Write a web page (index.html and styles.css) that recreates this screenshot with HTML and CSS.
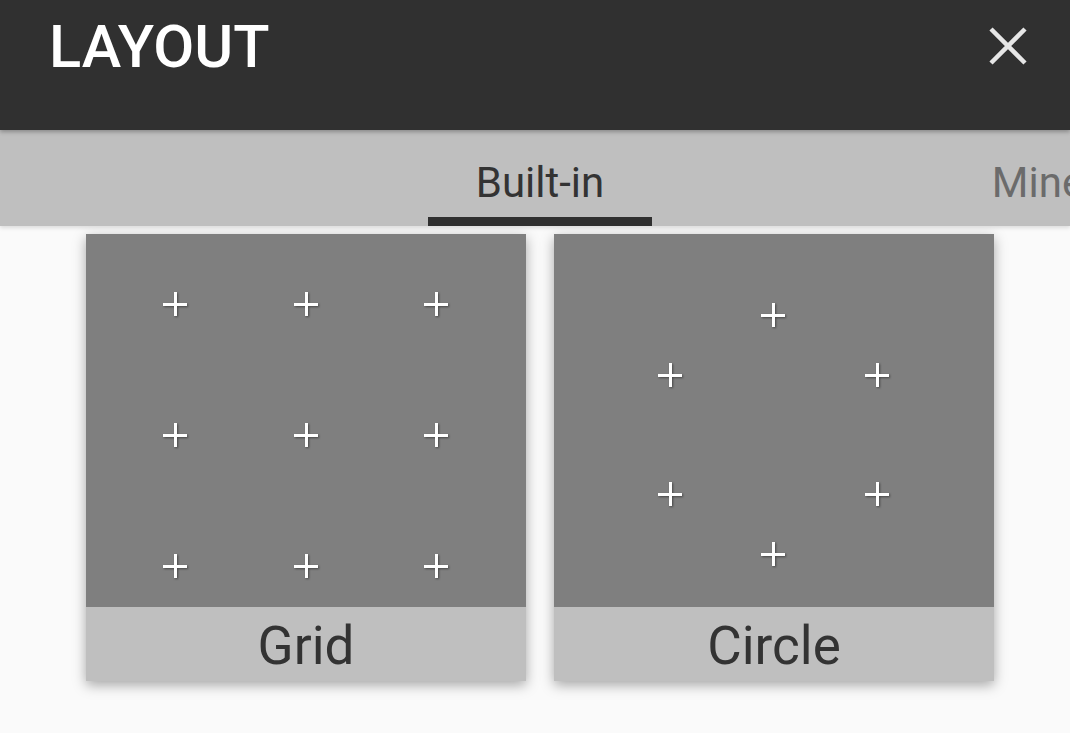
FILE: index.html
```html
<!DOCTYPE html>
<html>
<head>
<meta charset="utf-8">
<link rel="stylesheet" href="styles.css">
</head>
<body>
<div class="screen">
  <header class="appbar">
    <h1 class="title">LAYOUT</h1>
    <svg class="close" width="38" height="38" viewBox="0 0 38 38" aria-label="Close">
      <path d="M2 2 L36 36 M36 2 L2 36" stroke="#e6e6e6" stroke-width="4.5" stroke-linecap="butt" fill="none"/>
    </svg>
  </header>
  <nav class="tabs">
    <div class="tab tab-active"><span class="tab-label">Built-in</span><span class="indicator"></span></div>
    <div class="tab"><span class="tab-label">Mine</span></div>
  </nav>
  <main class="content">
    <div class="card">
      <div class="preview">
        <span class="plus g11"></span><span class="plus g12"></span><span class="plus g13"></span>
        <span class="plus g21"></span><span class="plus g22"></span><span class="plus g23"></span>
        <span class="plus g31"></span><span class="plus g32"></span><span class="plus g33"></span>
      </div>
      <div class="label">Grid</div>
    </div>
    <div class="card">
      <div class="preview">
        <span class="plus c1"></span>
        <span class="plus c2"></span><span class="plus c3"></span>
        <span class="plus c4"></span><span class="plus c5"></span>
        <span class="plus c6"></span>
      </div>
      <div class="label">Circle</div>
    </div>
  </main>
</div>
</body>
</html>
```

FILE: styles.css
```css
html, body {
  margin: 0;
  padding: 0;
  background: #fafafa;
}
body {
  font-family: Roboto, "Noto Sans", "Liberation Sans", sans-serif;
}
.screen {
  width: 1070px;
  height: 733px;
  overflow: hidden;
  background: #fafafa;
}
.appbar {
  position: relative;
  z-index: 2;
  height: 130px;
  background: #303030;
  display: flex;
  justify-content: space-between;
  align-items: flex-start;
  padding: 17px 43px 0 49px;
  box-sizing: border-box;
  box-shadow: 0 2px 4px rgba(0, 0, 0, 0.28);
}
.title {
  margin: 0;
  font-size: 59.5px;
  line-height: 61px;
  font-weight: 500;
  color: #ffffff;
  letter-spacing: 0;
}
.close {
  display: block;
  margin-top: 10px;
}
.tabs {
  position: relative;
  z-index: 1;
  height: 96px;
  background: #bfbfbf;
  display: flex;
  padding-left: 291px;
  overflow: hidden;
  box-shadow: 0 2px 4px rgba(0, 0, 0, 0.12);
}
.tab {
  position: relative;
  flex: 0 0 498px;
  display: flex;
  justify-content: center;
  padding-top: 32px;
  box-sizing: border-box;
}
.tab-label {
  font-size: 42px;
  line-height: 42px;
  color: #6b6b6b;
}
.tab-active .tab-label {
  color: #333333;
}
.indicator {
  position: absolute;
  left: 137px;
  bottom: 0;
  width: 224px;
  height: 9px;
  background: #303030;
}
.content {
  display: flex;
  gap: 28px;
  padding: 8px 0 0 86px;
}
.card {
  width: 440px;
  box-shadow: 0 4px 12px rgba(0, 0, 0, 0.34);
}
.preview {
  position: relative;
  height: 373px;
  background: #7f7f7f;
}
.label {
  height: 74px;
  box-sizing: border-box;
  padding-top: 13px;
  background: #bfbfbf;
  text-align: center;
  font-size: 53px;
  line-height: 53px;
  color: #333333;
}
.plus {
  position: absolute;
  width: 24px;
  height: 24px;
  margin: -12px 0 0 -12px;
  filter: drop-shadow(1px 1px 1px rgba(0, 0, 0, 0.45));
}
.plus::before,
.plus::after {
  content: "";
  position: absolute;
  background: #ffffff;
}
.plus::before {
  left: 0;
  top: 10.5px;
  width: 24px;
  height: 3px;
}
.plus::after {
  left: 10.5px;
  top: 0;
  width: 3px;
  height: 24px;
}
.g11 { left: 89px; top: 70px; }
.g12 { left: 220px; top: 70px; }
.g13 { left: 350px; top: 70px; }
.g21 { left: 89px; top: 201px; }
.g22 { left: 220px; top: 201px; }
.g23 { left: 350px; top: 201px; }
.g31 { left: 89px; top: 332px; }
.g32 { left: 220px; top: 332px; }
.g33 { left: 350px; top: 332px; }
.c1 { left: 219px; top: 81px; }
.c2 { left: 116px; top: 141px; }
.c3 { left: 323px; top: 141px; }
.c4 { left: 116px; top: 260px; }
.c5 { left: 323px; top: 260px; }
.c6 { left: 219px; top: 320px; }
```
